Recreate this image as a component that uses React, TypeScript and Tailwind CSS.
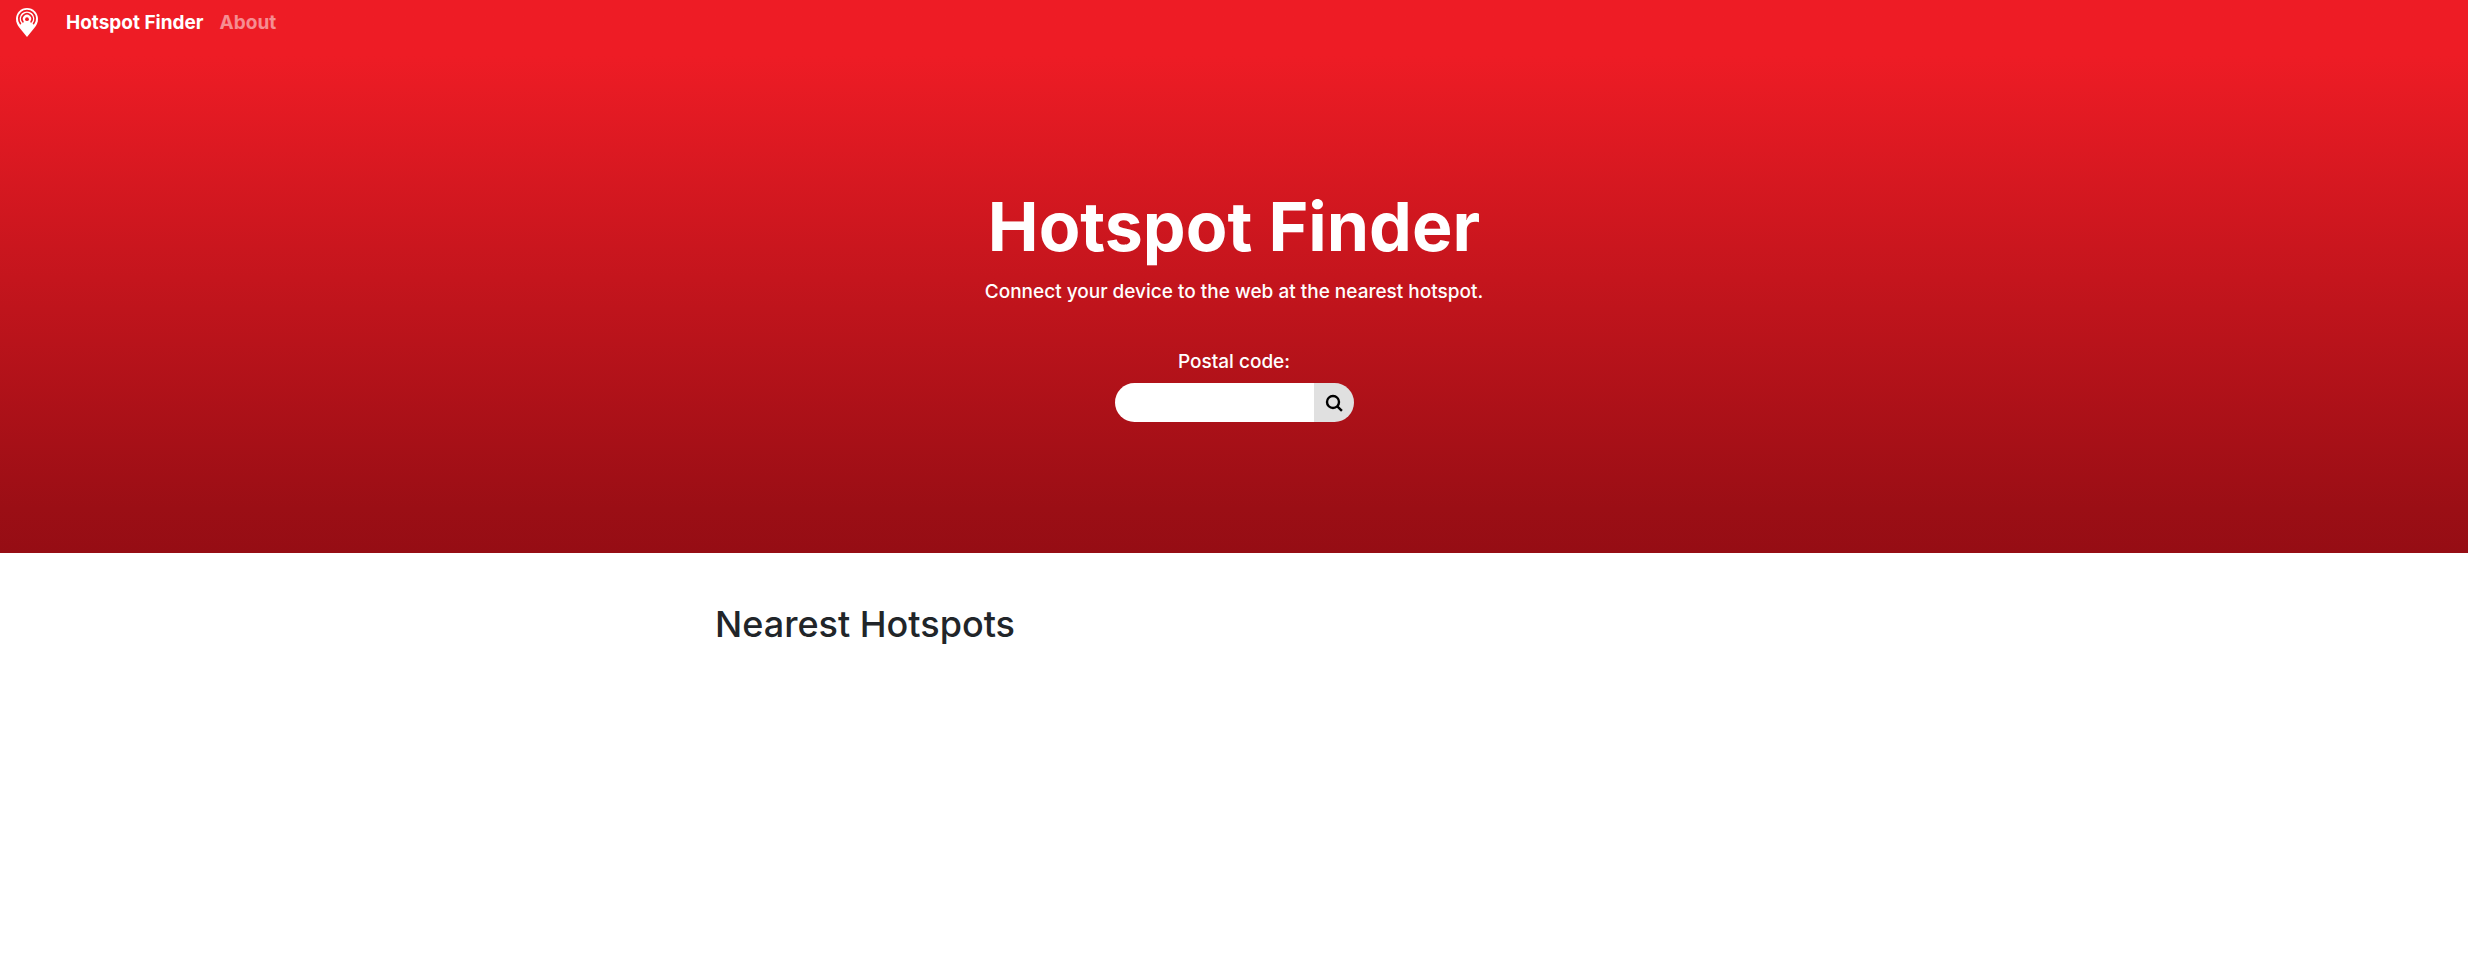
import type { ReactNode } from "react";

function PinLogo() {
  return (
    <svg viewBox="0 0 22 29" className="h-[29px] w-[22px]" aria-hidden="true">
      <path
        fill="#fff"
        d="M11 0C4.900 0 0 4.900 0 10.900c0 3.400 1.500 6.100 3.300 8.600L11 29l7.700-9.500c1.800-2.500 3.300-5.200 3.300-8.600C22 4.900 17.100 0 11 0Z"
      />
      <g fill="none" stroke="#ee1c25" strokeWidth="1.700" strokeLinecap="round">
        <path d="M4.400 15.600A8.200 8.200 0 1 1 17.600 15.600" />
        <path d="M6.900 13.800A5 5 0 1 1 15.100 13.800" />
      </g>
      <circle cx="11" cy="11.200" r="1.900" fill="#ee1c25" />
    </svg>
  );
}

function NavLink({ active, children }: { active?: boolean; children: ReactNode }) {
  return (
    <a href="#" className={active ? "text-white" : "text-white/50"}>
      {children}
    </a>
  );
}

export default function App() {
  return (
    <div className="min-h-screen bg-white font-['Inter',sans-serif] text-[#212529]">
      <header className="bg-linear-to-b from-[#ee1c25] from-10% via-[#9b0e15] via-92% to-[#960d14] text-white">
        <nav className="flex h-[45px] items-center px-4 text-[19px] leading-7 font-bold">
          <a href="#" aria-label="Home" className="mr-7">
            <PinLogo />
          </a>
          <div className="flex gap-4">
            <NavLink active>Hotspot Finder</NavLink>
            <NavLink>About</NavLink>
          </div>
        </nav>
        <div className="flex flex-col items-center px-4 pt-[136px] pb-[131px] text-center">
          <h1 className="text-[68px] leading-[90px] font-bold">Hotspot Finder</h1>
          <p className="mt-[7px] text-[19px] leading-7 font-medium">
            Connect your device to the web at the nearest hotspot.
          </p>
          <form
            className="mt-[42px] flex flex-col items-center"
            onSubmit={(event) => event.preventDefault()}
          >
            <label htmlFor="postal" className="text-[19px] leading-7 font-medium">
              Postal code:
            </label>
            <div className="mt-[7px] flex h-[39px] w-[239px] overflow-hidden rounded-full">
              <input
                id="postal"
                type="text"
                className="min-w-0 flex-1 bg-white px-4 text-[19px] text-[#212529] outline-none"
              />
              <button
                type="submit"
                aria-label="Search"
                className="flex w-10 items-center justify-center bg-[#e0e0e0]"
              >
                <svg viewBox="0 0 18 18" className="size-[18px]" fill="none" stroke="#000" strokeWidth="2.400">
                  <circle cx="8" cy="8" r="6" />
                  <path d="m12.300 12.300 4.600 4.500" />
                </svg>
              </button>
            </div>
          </form>
        </div>
      </header>
      <main className="mx-auto max-w-[1062px] px-3 pt-12">
        <h2 className="text-4xl leading-[46px] font-medium">Nearest Hotspots</h2>
      </main>
    </div>
  );
}
